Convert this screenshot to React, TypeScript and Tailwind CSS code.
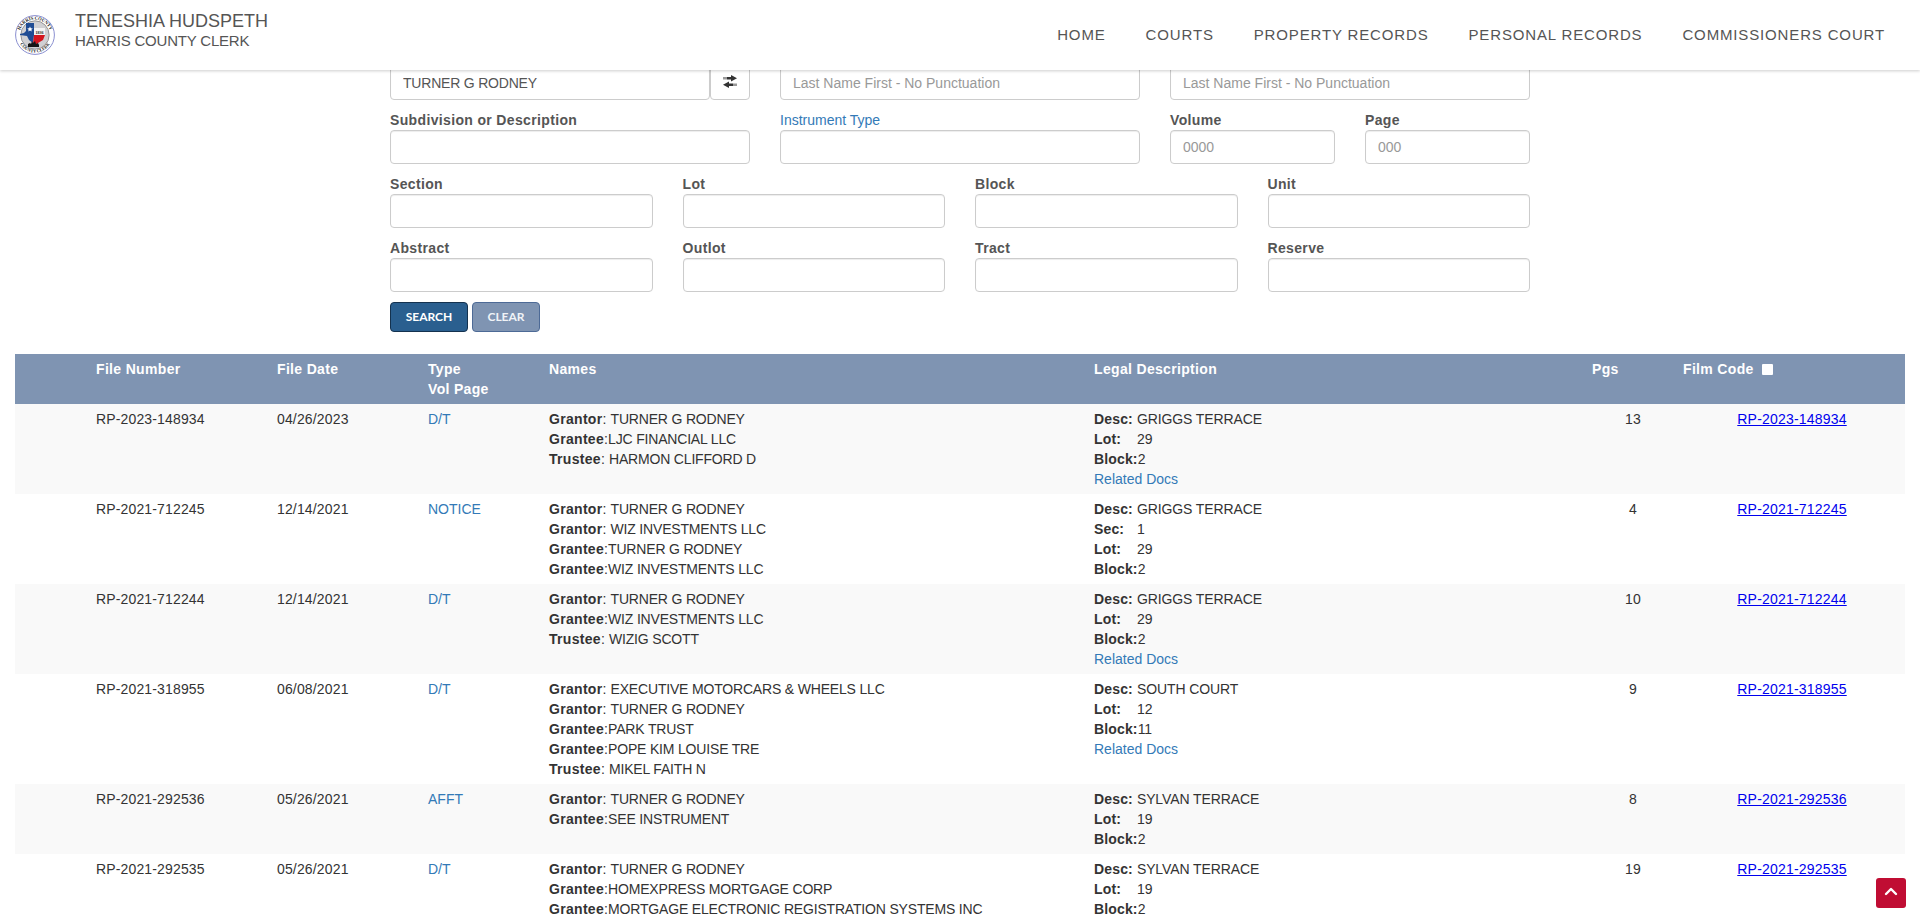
const font = "font-['Liberation_Sans',Arial,sans-serif]";

type NameLine = { role: string; name: string };
type LegalLine = { label: string; value: string; gap?: boolean };

interface Row {
  file: string;
  date: string;
  type: string;
  names: NameLine[];
  legal: LegalLine[];
  related?: boolean;
  pgs: number;
}

const g = (name: string) => ({ role: "Grantor", name });
const e = (name: string) => ({ role: "Grantee", name });
const t = (name: string) => ({ role: "Trustee", name });

const ROWS: Row[] = [
  {
    file: "RP-2023-148934",
    date: "04/26/2023",
    type: "D/T",
    names: [g("TURNER G RODNEY"), e("LJC FINANCIAL LLC"), t("HARMON CLIFFORD D")],
    legal: [{ label: "Desc:", value: "GRIGGS TERRACE" }, { label: "Lot:", value: "29", gap: true }, { label: "Block:", value: "2" }],
    related: true,
    pgs: 13,
  },
  {
    file: "RP-2021-712245",
    date: "12/14/2021",
    type: "NOTICE",
    names: [g("TURNER G RODNEY"), g("WIZ INVESTMENTS LLC"), e("TURNER G RODNEY"), e("WIZ INVESTMENTS LLC")],
    legal: [
      { label: "Desc:", value: "GRIGGS TERRACE" },
      { label: "Sec:", value: "1", gap: true },
      { label: "Lot:", value: "29", gap: true },
      { label: "Block:", value: "2" },
    ],
    pgs: 4,
  },
  {
    file: "RP-2021-712244",
    date: "12/14/2021",
    type: "D/T",
    names: [g("TURNER G RODNEY"), e("WIZ INVESTMENTS LLC"), t("WIZIG SCOTT")],
    legal: [{ label: "Desc:", value: "GRIGGS TERRACE" }, { label: "Lot:", value: "29", gap: true }, { label: "Block:", value: "2" }],
    related: true,
    pgs: 10,
  },
  {
    file: "RP-2021-318955",
    date: "06/08/2021",
    type: "D/T",
    names: [
      g("EXECUTIVE MOTORCARS & WHEELS LLC"),
      g("TURNER G RODNEY"),
      e("PARK TRUST"),
      e("POPE KIM LOUISE TRE"),
      t("MIKEL FAITH N"),
    ],
    legal: [{ label: "Desc:", value: "SOUTH COURT" }, { label: "Lot:", value: "12", gap: true }, { label: "Block:", value: "11" }],
    related: true,
    pgs: 9,
  },
  {
    file: "RP-2021-292536",
    date: "05/26/2021",
    type: "AFFT",
    names: [g("TURNER G RODNEY"), e("SEE INSTRUMENT")],
    legal: [{ label: "Desc:", value: "SYLVAN TERRACE" }, { label: "Lot:", value: "19", gap: true }, { label: "Block:", value: "2" }],
    pgs: 8,
  },
  {
    file: "RP-2021-292535",
    date: "05/26/2021",
    type: "D/T",
    names: [g("TURNER G RODNEY"), e("HOMEXPRESS MORTGAGE CORP"), e("MORTGAGE ELECTRONIC REGISTRATION SYSTEMS INC")],
    legal: [{ label: "Desc:", value: "SYLVAN TERRACE" }, { label: "Lot:", value: "19", gap: true }, { label: "Block:", value: "2" }],
    pgs: 19,
  },
];

const NAV = ["HOME", "COURTS", "PROPERTY RECORDS", "PERSONAL RECORDS", "COMMISSIONERS COURT"];

function Logo() {
  return (
    <svg width="40" height="40" viewBox="0 0 40 40" className="shrink-0">
      <defs>
        <path id="sealTop" d="M4.5 20a15.5 15.5 0 0 1 31 0" />
        <path id="sealBottom" d="M2.5 20a17.5 17.5 0 0 0 35 0" />
      </defs>
      <circle cx="20" cy="20" r="19.4" fill="#fff" stroke="#8a8fd0" strokeWidth="1" />
      <circle cx="20" cy="20" r="14.2" fill="#d0d0d3" stroke="#666" strokeWidth="0.6" />
      <text fontSize="4.6" fontFamily="'Liberation Serif',serif" fontWeight="700" fill="#222">
        <textPath href="#sealTop" startOffset="50%" textAnchor="middle">HARRIS COUNTY</textPath>
      </text>
      <text fontSize="4.4" fontFamily="'Liberation Serif',serif" fontWeight="700" fill="#222">
        <textPath href="#sealBottom" startOffset="50%" textAnchor="middle">COUNTY CLERK</textPath>
      </text>
      <polygon points="11,8 19,8 19,20 18,28 14,25 12,21 5,20 5,19 9,18 11,16" fill="#1f4c94" />
      <rect x="19" y="13" width="11" height="7" fill="#f4f4f4" />
      <polygon points="19,20 30,20 28,25 23,28 20,32 18,28" fill="#d4161f" />
      <text x="24.5" y="18.6" fontSize="4" textAnchor="middle" fontWeight="700" fontFamily="'Liberation Serif',serif" fill="#222">1836</text>
      <path d="M13 32v-3l2-1 1 1 1-3 1 2 2-2 1 3 2-1 1 2v2z" fill="#161616" />
      <path d="M15 11.5l.8 1.8 2 .1-1.5 1.3.5 1.9-1.8-1-1.8 1 .5-1.9-1.5-1.3 2-.1z" fill="#fff" />
    </svg>
  );
}

function SwapIcon() {
  return (
    <svg width="14" height="13" viewBox="0 0 14 13" className="mb-1">
      <rect x="0" y="2" width="4" height="2.5" fill="#999" />
      <rect x="4" y="2" width="5" height="2.5" fill="#333" />
      <polygon points="8,0 14,3.2 8,6.4" fill="#333" />
      <rect x="10" y="8.5" width="4" height="2.5" fill="#999" />
      <rect x="5" y="8.5" width="5" height="2.5" fill="#333" />
      <polygon points="6,6.6 0,9.8 6,13" fill="#333" />
    </svg>
  );
}

function Label({ children }: { children: string }) {
  return <label className="block h-5 text-sm leading-5 font-bold text-[#555] tracking-[0.35px]">{children}</label>;
}

function Field({ label, placeholder, value }: { label: string; placeholder?: string; value?: string }) {
  return (
    <div className="min-w-0">
      <Label>{label}</Label>
      <Input placeholder={placeholder} value={value} />
    </div>
  );
}

function Input({ placeholder, value, className = "" }: { placeholder?: string; value?: string; className?: string }) {
  return (
    <input
      readOnly
      value={value ?? ""}
      placeholder={placeholder}
      className={`block h-[34px] w-full rounded border border-[#ccc] bg-white px-3 text-sm text-[#555] shadow-[inset_0_1px_1px_rgba(0,0,0,0.075)] outline-none placeholder:text-[#999] ${className}`}
    />
  );
}

function SearchForm() {
  return (
    <form className="ml-[390px] -mt-1 w-[1140px]">
      <div className="mb-2.5 grid grid-cols-3 gap-x-[30px]">
        <div className="flex">
          <Input value="TURNER G RODNEY" className="tracking-[-0.2px]" />
          <button type="button" className="flex h-[34px] w-10 shrink-0 items-center justify-center rounded border border-[#ccc] bg-white">
            <SwapIcon />
          </button>
        </div>
        <Input placeholder="Last Name First - No Punctuation" />
        <Input placeholder="Last Name First - No Punctuation" />
      </div>

      <div className="mb-2.5 grid grid-cols-3 gap-x-[30px]">
        <Field label="Subdivision or Description" />
        <div>
          <a className="block h-5 text-sm leading-5 text-[#337ab7]">Instrument Type</a>
          <Input />
        </div>
        <div className="grid grid-cols-2 gap-x-[30px]">
          <Field label="Volume" placeholder="0000" />
          <Field label="Page" placeholder="000" />
        </div>
      </div>

      <div className="mb-2.5 grid grid-cols-4 gap-x-[30px]">
        <Field label="Section" />
        <Field label="Lot" />
        <Field label="Block" />
        <Field label="Unit" />
      </div>

      <div className="mb-2.5 grid grid-cols-4 gap-x-[30px]">
        <Field label="Abstract" />
        <Field label="Outlot" />
        <Field label="Tract" />
        <Field label="Reserve" />
      </div>

      <div className="flex gap-1">
        <button type="button" className="h-[30px] w-[78px] rounded border border-[#14324f] bg-[#2a5f8f] font-['Lato',sans-serif] text-xs font-bold text-white">
          SEARCH
        </button>
        <button type="button" className="h-[30px] w-[68px] rounded border border-[#4d6a96] bg-[#7f94b2] font-['Lato',sans-serif] text-xs font-bold text-[#f0f3f7]">
          CLEAR
        </button>
      </div>
    </form>
  );
}

function ResultsTable() {
  return (
    <table className="ml-[15px] mt-[22px] w-[1890px] table-fixed border-collapse text-sm leading-5 text-[#333] tracking-[0.15px]">
      <colgroup>
        <col className="w-[76px]" />
        <col className="w-[181px]" />
        <col className="w-[151px]" />
        <col className="w-[121px]" />
        <col className="w-[545px]" />
        <col className="w-[498px]" />
        <col className="w-[92px]" />
        <col className="w-[226px]" />
      </colgroup>
      <thead>
        <tr className="bg-[#7f94b2] text-left align-top font-bold text-white tracking-[0.33px]">
          <th className="p-[5px]" />
          <th className="p-[5px]">File Number</th>
          <th className="p-[5px]">File Date</th>
          <th className="p-[5px]">Type<br />Vol Page</th>
          <th className="p-[5px]">Names</th>
          <th className="p-[5px]">Legal Description</th>
          <th className="p-[5px]">Pgs</th>
          <th className="py-[5px] pl-1 pr-[5px]">
            <span className="flex items-center gap-2">
              Film Code
              <span className="h-[11px] w-[11px] rounded-[1px] bg-white" />
            </span>
          </th>
        </tr>
      </thead>
      <tbody>
        {ROWS.map((row) => (
          <tr key={row.file} className="align-top odd:bg-[#f9f9f9]">
            <td className="p-[5px]" />
            <td className="p-[5px]">{row.file}</td>
            <td className="p-[5px]">{row.date}</td>
            <td className="p-[5px] tracking-normal"><a className="text-[#337ab7]">{row.type}</a></td>
            <td className="p-[5px]">
              {row.names.map((n, i) => (
                <div key={i}>
                  <b className="tracking-[0.3px]">{n.role}</b>{n.role === "Grantee" ? ":" : ": "}
                  <span className="tracking-[-0.18px]">{n.name}</span>
                </div>
              ))}
            </td>
            <td className="p-[5px]">
              {row.legal.map((l, i) => (
                <div key={i} className="flex">
                  <b className={l.gap ? "w-[43px]" : l.label === "Desc:" ? "mr-1" : ""}>{l.label}</b>
                  <span className="tracking-[-0.1px]">{l.value}</span>
                </div>
              ))}
              {row.related && <a className="text-[#337ab7] tracking-normal">Related Docs</a>}
            </td>
            <td className="p-[5px] text-center">{row.pgs}</td>
            <td className="p-[5px] text-center"><a className="text-[#0000ee] underline tracking-[0.2px]">{row.file}</a></td>
          </tr>
        ))}
      </tbody>
    </table>
  );
}

export default function App() {
  return (
    <div className={`flex h-screen flex-col overflow-hidden bg-white ${font}`}>
      <header className="relative z-10 flex h-[70px] shrink-0 items-center justify-between bg-white pl-[15px] pr-[35px] shadow-[0_1px_3px_rgba(0,0,0,0.2)]">
        <div className="flex items-center gap-5">
          <Logo />
          <div className="mb-2 text-[#555]">
            <div className="text-lg leading-5">TENESHIA HUDSPETH</div>
            <div className="text-[15px] leading-5 tracking-[-0.2px]">HARRIS COUNTY CLERK</div>
          </div>
        </div>
        <nav className="flex gap-10 text-[15px] tracking-[0.85px] text-[#555]">
          {NAV.map((item) => (
            <a key={item}>{item}</a>
          ))}
        </nav>
      </header>

      <main className="min-h-0 flex-1 overflow-hidden">
        <SearchForm />
        <ResultsTable />
      </main>

      <button type="button" className="fixed left-[1876px] top-[878px] flex h-[30px] w-[30px] items-center justify-center rounded-[3px] bg-[#c00d33]">
        <svg width="14" height="14" viewBox="0 0 14 14" fill="none" stroke="#fff" strokeWidth="2.4" strokeLinecap="round" strokeLinejoin="round" className="mb-[3px]">
          <path d="M2 9 7 4l5 5" />
        </svg>
      </button>
    </div>
  );
}
